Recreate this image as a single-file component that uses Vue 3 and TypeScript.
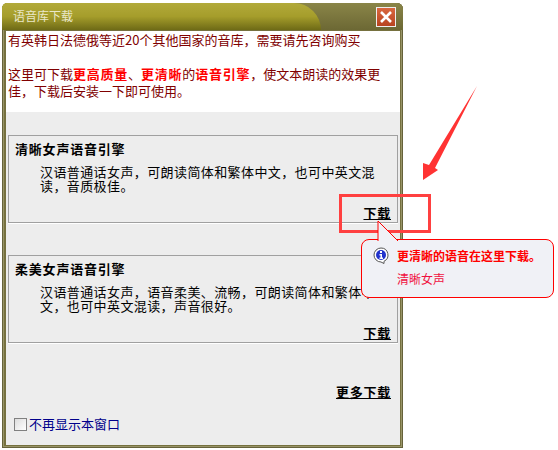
<script setup lang="ts">
interface Engine { title: string; desc: string }
const engines: Engine[] = [
  { title: '清晰女声语音引擎', desc: '汉语普通话女声，可朗读简体和繁体中文，也可中英文混读，音质极佳。' },
  { title: '柔美女声语音引擎', desc: '汉语普通话女声，语音柔美、流畅，可朗读简体和繁体中文，也可中英文混读，声音很好。' },
]
</script>

<template>
  <div class="page">
    <div class="window">
      <div class="titlebar">
        <div class="tab"><span class="title-text">语音库下载</span></div>
        <div class="close">
          <svg width="14" height="14" viewBox="0 0 14 14"><path d="M2 2L12 12M12 2L2 12" stroke="#fff" stroke-width="2.600" /></svg>
        </div>
      </div>
      <div class="frame">
        <div class="notice">
          <p class="line">有英韩日法德俄等近20个其他国家的音库，需要请先咨询购买</p>
          <p class="para">这里可下载<b>更高质量</b>、<b>更清晰</b>的<b>语音引擎</b>，使文本朗读的效果更佳，下载后安装一下即可使用。</p>
        </div>
        <div class="content">
          <section v-for="e in engines" :key="e.title" class="panel">
            <h3 class="panel-title">{{ e.title }}</h3>
            <p class="panel-desc">{{ e.desc }}</p>
            <a class="dl panel-dl">下载</a>
          </section>
          <div class="more"><a class="dl">更多下载</a></div>
          <label class="check"><span class="box"></span><span>不再显示本窗口</span></label>
        </div>
      </div>
    </div>

    <svg class="arrow" width="70" height="110" viewBox="0 0 70 110">
      <path d="M58 1L16 83L19 85L4 95L4 78L10 80Z" fill="#ff3333" />
    </svg>
    <div class="highlight"></div>

    <div class="callout">
      <svg class="tail" width="30" height="22" viewBox="0 0 30 22">
        <path d="M1 21V1L21 21" fill="#f0f1f6" stroke="#f00" stroke-width="1" />
      </svg>
      <svg class="info" width="16" height="17" viewBox="0 0 16 17">
        <path d="M8 1a7 7 0 0 1 3 13.300L11 16.500L8 15A7 7 0 1 1 8 1Z" fill="#fff" stroke="#555" />
        <circle cx="8" cy="8" r="5" fill="#2233cc" />
        <path d="M7 4h2v2H7zM6.500 7H9v3.500h1V12H6.500v-1.500h1V8.500h-1z" fill="#fff" />
      </svg>
      <div class="callout-body">
        <div class="callout-head">更清晰的语音在这里下载。</div>
        <div class="callout-link">清晰女声</div>
      </div>
    </div>
  </div>
</template>

<style scoped>
.page {
  position: relative;
  width: 558px;
  height: 450px;
  box-sizing: border-box;
  padding: 3px 155px 2px 2px;
  background: #fff;
  overflow: hidden;
  font-family: "Noto Sans CJK SC", "Liberation Sans", sans-serif;
  font-size: 13px;
}
.window {
  height: 100%;
  display: flex;
  flex-direction: column;
  background: #76713f;
  border-radius: 6px 6px 0 0;
  box-shadow: inset 0 0 0 1px #66623a, inset 0 0 0 2px #989468;
}
.titlebar {
  height: 27px;
  display: flex;
  justify-content: space-between;
  align-items: flex-start;
  flex: none;
  padding: 0 7px 0 0;
  background: linear-gradient(#8a8548, #6c6834);
  border-radius: 6px 6px 0 0;
}
.tab {
  width: 319px;
  height: 27px;
  box-sizing: border-box;
  padding: 3px 0 0 11px;
  background: linear-gradient(#b2aa3a 0%, #a59d2b 50%, #6e6a16 100%);
  border-radius: 6px 34px 0 0;
}
.title-text {
  color: #e9e7c9;
  font-size: 12px;
  line-height: 20px;
}
.close {
  width: 20px;
  height: 20px;
  margin-top: 4px;
  box-sizing: border-box;
  border: 1px solid #eee;
  background: linear-gradient(#d9673f, #b8431f);
  display: flex;
  align-items: center;
  justify-content: center;
}
.frame {
  flex: 1;
  margin: 1px 3px 3px 4px;
  display: flex;
  flex-direction: column;
  min-height: 0;
}
.notice {
  height: 81px;
  flex: none;
  box-sizing: border-box;
  padding: 0 9px 0 2px;
  background: #fff;
  color: #800000;
  line-height: 17px;
}
.line { margin: 0 0 17px; white-space: nowrap; }
.para { margin: 0; }
.para b { color: #f00; letter-spacing: 0.75px; }
.content {
  flex: 1;
  background: #ededed;
  padding: 23px 2px 0;
  display: flex;
  flex-direction: column;
}
.panel {
  height: 88px;
  box-sizing: border-box;
  margin-bottom: 32px;
  border: 1px solid #a0a0a0;
  box-shadow: 0 1px 0 #fff;
  padding: 5px 6px 0;
  display: flex;
  flex-direction: column;
  color: #000;
}
.panel-title {
  margin: 0;
  font-size: 13px;
  font-weight: 700;
  line-height: 16px;
  letter-spacing: 0.8px;
}
.panel-desc {
  margin: 8px 0 0;
  padding-left: 25px;
  width: 340px;
  line-height: 14px;
  letter-spacing: 0.4px;
}
.panel-dl { margin-top: auto; margin-bottom: 1px; align-self: flex-end; }
.dl {
  color: #000;
  font-weight: 700;
  text-decoration: underline;
  line-height: 16px;
  letter-spacing: 0.75px;
}
.more {
  text-align: right;
  padding: 9px 7px 0 0;
  line-height: 16px;
}
.check {
  margin: 16px 0 0 6px;
  display: flex;
  align-items: center;
  gap: 2px;
  color: #00008b;
  line-height: 16px;
}
.box {
  width: 11px;
  height: 11px;
  border: 1px solid #808080;
  background: linear-gradient(135deg, #ddd, #fff);
}
.arrow {
  position: absolute;
  left: 419px;
  top: 85px;
}
.highlight {
  position: absolute;
  left: 339px;
  top: 194px;
  width: 86px;
  height: 33px;
  border: 3px solid #ff4040;
}
.callout {
  position: absolute;
  left: 361px;
  top: 239px;
  width: 193px;
  height: 59px;
  box-sizing: border-box;
  border: 1px solid #f00;
  border-radius: 8px;
  background: #f0f1f6;
  padding: 8px 0 0 35px;
}
.tail {
  position: absolute;
  left: 15px;
  top: -20px;
}
.info {
  position: absolute;
  left: 11px;
  top: 7px;
}
.callout-body {
  line-height: 16px;
  color: #f00;
  white-space: nowrap;
}
.callout-head { font-weight: 700; font-size: 12px; }
.callout-link { margin-top: 7px; color: #f01040; font-size: 12px; }
</style>
